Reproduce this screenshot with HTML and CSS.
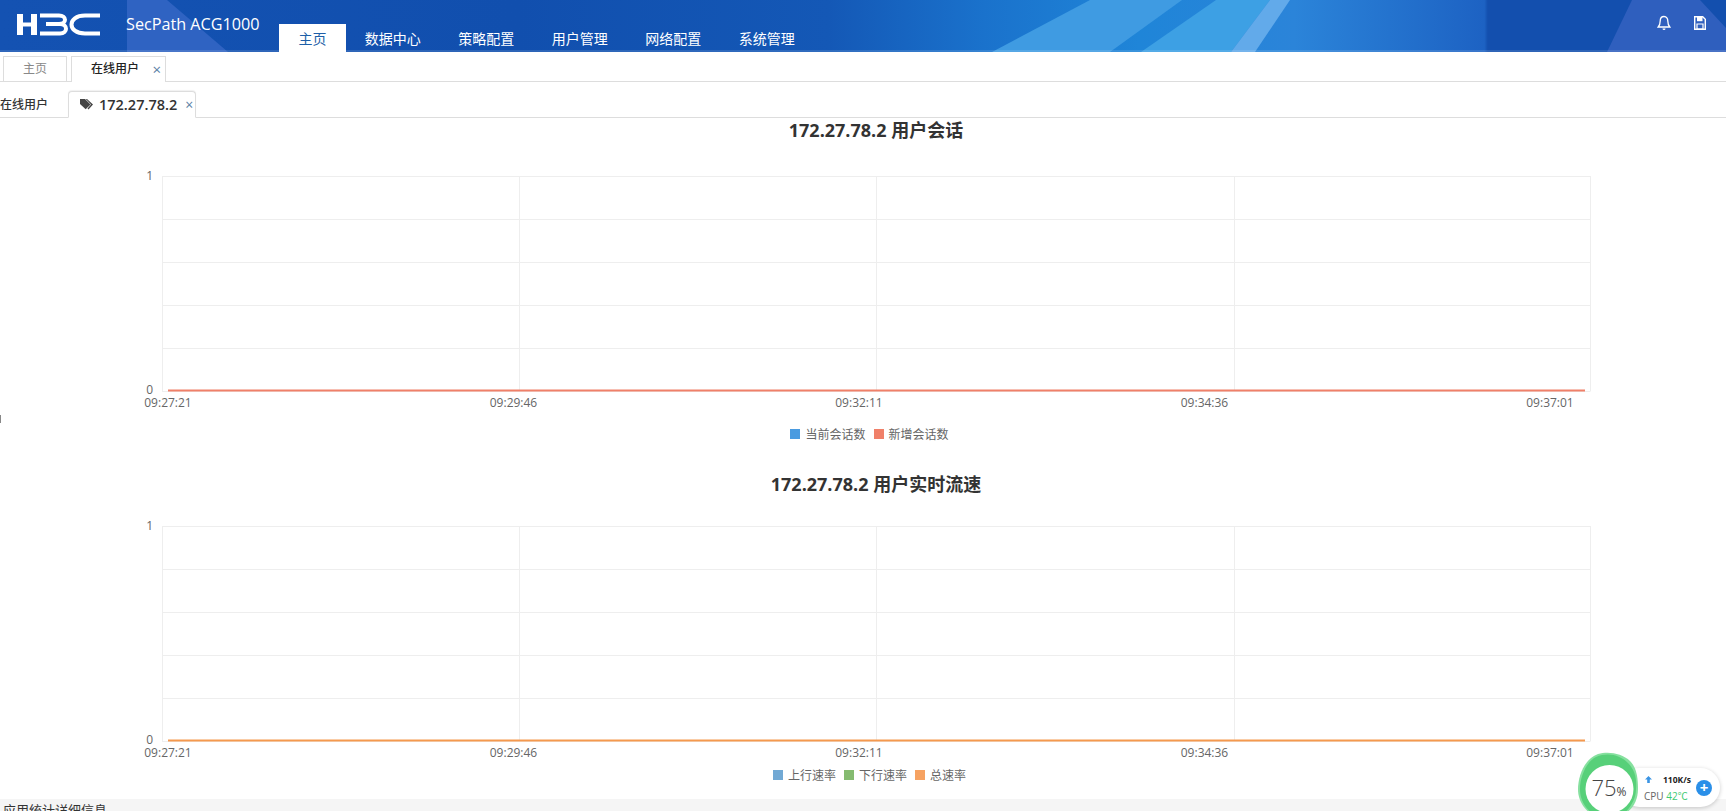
FILE: index.html
```html
<!DOCTYPE html>
<html lang="zh-CN">
<head>
<meta charset="utf-8">
<title>SecPath ACG1000</title>
<link rel="stylesheet" href="styles.css">
</head>
<body>
<div class="page">
  <header class="topbar">
    <svg class="topbar-bg" width="1726" height="52" viewBox="0 0 1726 52" preserveAspectRatio="none" aria-hidden="true">
      <defs>
        <linearGradient id="bgGrad" x1="0" x2="1" y1="0" y2="0">
          <stop offset="0" stop-color="#1452b2"/>
          <stop offset="0.3" stop-color="#114fae"/>
          <stop offset="0.48" stop-color="#1458b6"/>
          <stop offset="0.57" stop-color="#1a72cc"/>
          <stop offset="0.66" stop-color="#1f85d8"/>
          <stop offset="0.75" stop-color="#2b84d9"/>
          <stop offset="0.86" stop-color="#1d62c3"/>
          <stop offset="0.862" stop-color="#134fae"/>
          <stop offset="1" stop-color="#134fae"/>
        </linearGradient>
      </defs>
      <rect width="1726" height="52" fill="url(#bgGrad)"/>
      <polygon points="127,0 167,0 228,52 127,52" fill="#2f63c2"/>
      <polygon points="992,52 1090,0 1182,0 1110,52" fill="#3f9be2"/>
      <polygon points="1141,52 1216,0 1270,0 1231,52" fill="#3da0e4"/>
      <polygon points="1231,52 1270,0 1290,0 1255,52" fill="#62aaea"/>
      <polygon points="1607,52 1632,0 1700,0 1726,28 1726,52" fill="#2f5fbe"/>
      <rect y="50" width="1726" height="2" fill="#ffffff" fill-opacity="0.12"/>
    </svg>
    <svg class="logo" width="84" height="23" viewBox="0 0 84 23" aria-label="H3C">
      <g fill="none" stroke="#fff">
        <path d="M3 1v21M17 1v21" stroke-width="6"/>
        <path d="M3 11.500h14" stroke-width="4"/>
        <path d="M23 2.500H42C50 2.500 50 11 42 11H29H43C51 11 51 20.500 43 20.500H23" stroke-width="4"/>
        <path d="M83 2.500H68C50 2.500 50 20.500 68 20.500H83" stroke-width="4"/>
      </g>
    </svg>
    <span class="product">SecPath ACG1000</span>
    <nav class="mainnav">
      <a class="navitem navitem-active">主页</a>
      <a class="navitem">数据中心</a>
      <a class="navitem">策略配置</a>
      <a class="navitem">用户管理</a>
      <a class="navitem">网络配置</a>
      <a class="navitem">系统管理</a>
    </nav>
    <div class="top-icons">
      <svg width="14" height="16" viewBox="0 0 14 16" aria-label="通知">
        <path d="M7 1.500c-2.600 0-3.800 2-3.800 4.500 0 3-.8 4.600-2 6h11.600c-1.200-1.400-2-3-2-6 0-2.500-1.200-4.500-3.800-4.500z" fill="none" stroke="#fff" stroke-width="1.300"/>
        <path d="M5.500 13.500a1.500 1.500 0 0 0 3 0z" fill="#fff"/>
      </svg>
      <svg width="12" height="16" viewBox="0 0 12 16" aria-label="保存">
        <path d="M.7 1.700h8l2.600 2.500v10H.7z" fill="none" stroke="#fff" stroke-width="1.400"/>
        <path d="M3 1.700h5.500v4.500H3z" fill="#fff"/>
        <path d="M3 9h6v5H3z" fill="none" stroke="#fff" stroke-width="1.200"/>
      </svg>
    </div>
  </header>

  <div class="pagetabs">
    <span class="pagetab">主页</span>
    <span class="pagetab pagetab-active">在线用户<i class="close">×</i></span>
  </div>

  <div class="subtabs">
    <span class="subtab">在线用户</span>
    <span class="subtab subtab-active">
      <svg width="14" height="11" viewBox="0 0 14 11" aria-hidden="true">
        <path d="M0 0h5l5.500 5.500-4.800 4.800L0 5z" fill="#444"/>
        <path d="M7 0l6 5.500-4.500 5-1-1L11 5.500 5.800 0z" fill="#444"/>
      </svg>
      172.27.78.2<i class="close">×</i>
    </span>
  </div>

  <main class="charts">
    <section class="chart">
      <h2 class="chart-title">172.27.78.2 用户会话</h2>
      <svg class="plot" width="1726" height="270" viewBox="0 0 1726 270">
        <g class="grid">
          <path d="M162 32.500H1590.500M162 75.500H1590.500M162 118.500H1590.500M162 161.500H1590.500M162 204.500H1590.500M162 247.500H1590.500"/>
          <path d="M162.500 32V247M519.500 32V247M876.500 32V247M1234.500 32V247M1590.500 32V247"/>
        </g>
        <text class="ylabel" x="153" y="36">1</text>
        <text class="ylabel" x="153" y="250">0</text>
        <line x1="168" x2="1585" y1="246.500" y2="246.500" stroke="#f08069" stroke-width="2"/>
        <g class="xlabels">
          <text x="168" y="263">09:27:21</text>
          <text x="513.500" y="263">09:29:46</text>
          <text x="859" y="263">09:32:11</text>
          <text x="1204.500" y="263">09:34:36</text>
          <text x="1550" y="263">09:37:01</text>
        </g>
      </svg>
      <div class="legend legend-session">
        <span class="legend-item"><i class="swatch swatch-blue"></i>当前会话数</span>
        <span class="legend-item"><i class="swatch swatch-red"></i>新增会话数</span>
      </div>
    </section>

    <section class="chart chart-flow">
      <h2 class="chart-title">172.27.78.2 用户实时流速</h2>
      <svg class="plot" width="1726" height="264" viewBox="0 0 1726 264">
        <g class="grid">
          <path d="M162 28.500H1590.500M162 71.500H1590.500M162 114.500H1590.500M162 157.500H1590.500M162 200.500H1590.500M162 243.500H1590.500"/>
          <path d="M162.500 28V243M519.500 28V243M876.500 28V243M1234.500 28V243M1590.500 28V243"/>
        </g>
        <text class="ylabel" x="153" y="32">1</text>
        <text class="ylabel" x="153" y="246">0</text>
        <line x1="168" x2="1585" y1="242.500" y2="242.500" stroke="#f5994e" stroke-width="2"/>
        <g class="xlabels">
          <text x="168" y="259">09:27:21</text>
          <text x="513.500" y="259">09:29:46</text>
          <text x="859" y="259">09:32:11</text>
          <text x="1204.500" y="259">09:34:36</text>
          <text x="1550" y="259">09:37:01</text>
        </g>
      </svg>
      <div class="legend legend-flow">
        <span class="legend-item"><i class="swatch swatch-steel"></i>上行速率</span>
        <span class="legend-item"><i class="swatch swatch-green"></i>下行速率</span>
        <span class="legend-item"><i class="swatch swatch-orange"></i>总速率</span>
      </div>
    </section>
  </main>

  <footer class="appinfo">应用统计详细信息</footer>
  <i class="edge-mark"></i>

  <aside class="monitor">
    <div class="pill">
      <div class="pill-stats">
        <div class="speed">
          <svg width="9" height="9" viewBox="0 0 9 9" aria-hidden="true"><path d="M4.500 1L1 4.500h2.200V8h2.600V4.500H8z" fill="#3a94e4"/></svg>
          <span>110K/s</span>
        </div>
        <div class="cpu">CPU <em>42℃</em></div>
      </div>
      <span class="plus">+</span>
    </div>
    <svg class="ring" width="64" height="66" viewBox="0 0 64 66" aria-hidden="true">
      <path d="M22 5C32 2 46 4 54 12C61 19 62 30 62 40C62 52 56 62 46 66H16C6 58 2 50 2 40C2 28 8 10 22 5z" fill="#86e09f"/>
      <path d="M20 8C32 3 44 6 52 14C59 21 61 30 60 40C60 50 54 60 46 66H18C8 58 4 50 4 40C4 28 10 13 20 8z" fill="#57d079"/>
      <circle cx="33.500" cy="40" r="24" fill="#fff"/>
    </svg>
    <div class="ring-value"><b>75</b><small>%</small></div>
  </aside>
</div>
</body>
</html>
```
FILE: styles.css
```css
* { box-sizing: border-box; }
html, body { margin: 0; padding: 0; height: 100%; overflow: hidden; background: #fff; }
body { font-family: "Open Sans", "Noto Sans CJK SC", sans-serif; color: #333; }
.page { position: relative; width: 1726px; height: 811px; overflow: hidden; }

.topbar { position: relative; height: 52px; display: flex; align-items: flex-end; color: #fff; }
.topbar-bg { position: absolute; left: 0; top: 0; }
.logo { position: absolute; left: 17px; top: 13px; }
.product { position: absolute; left: 126px; top: 13px; font-size: 16.200px; line-height: 22px; font-weight: 400; white-space: nowrap; }
.mainnav { position: relative; display: flex; margin-left: 279px; height: 28px; }
.navitem { padding: 0 18.750px; font-size: 14px; line-height: 30px; color: #fff; white-space: nowrap; }
.navitem-active { padding: 0 19.500px; background: #fff; color: #1e5fa8; }
.top-icons { position: absolute; top: 15px; right: 20px; display: flex; gap: 23px; }
.top-icons svg { display: block; }

.pagetabs { height: 30px; display: flex; align-items: flex-end; gap: 4px; padding-left: 3px; border-bottom: 1px solid #ddd; }
.pagetab { height: 25px; width: 64px; border: 1px solid #ddd; border-bottom: 0; font-size: 12px; line-height: 23px; text-align: center; color: #888; background: #fff; }
.pagetab-active { position: relative; width: 95px; margin-bottom: -1px; height: 26px; padding: 0 7px 0 0; color: #222; font-weight: 500; }
.close { font-style: normal; font-weight: 400; color: #5b7fa6; font-size: 15px; }
.pagetab-active .close { position: absolute; right: 4px; top: 1px; }

.subtabs { height: 36px; display: flex; align-items: flex-end; border-bottom: 1px solid #ddd; }
.subtab { width: 68px; height: 25px; font-size: 12px; line-height: 25px; color: #333; white-space: nowrap; font-weight: 500; }
.subtab-active { width: 128px; height: 27px; margin-bottom: -1px; display: flex; align-items: center; gap: 5px; padding-left: 11px; border: 1px solid #ddd; border-bottom: 1px solid #fff; border-radius: 4px 4px 0 0; font-size: 14.500px; font-weight: 600; background: #fff; box-shadow: 0 -1px 1px rgba(0, 0, 0, 0.06); }
.subtab-active .close { margin-left: 3px; font-size: 14px; }

.chart-title { margin: 0; height: 26px; padding-left: 26px; font-size: 18px; line-height: 24px; font-weight: 700; text-align: center; color: #333; }
.chart-flow { margin-top: 18px; }
.plot { display: block; }
.grid path { fill: none; stroke: #eeeeee; stroke-width: 1; }
.ylabel { font-size: 12px; fill: #666; text-anchor: end; font-family: "Open Sans", sans-serif; }
.xlabels text { font-size: 12px; fill: #666; text-anchor: middle; font-family: "Open Sans", sans-serif; }

.legend { display: flex; justify-content: center; align-items: center; gap: 8px; padding-left: 13px; font-size: 12px; color: #666; }
.legend-session { height: 40px; }
.legend-flow { height: 26px; }
.legend-item { display: flex; align-items: center; gap: 5px; white-space: nowrap; }
.swatch { display: block; width: 10px; height: 10px; }
.swatch-blue { background: #4a9be0; }
.swatch-red { background: #f08069; }
.swatch-steel { background: #72a9d4; }
.swatch-green { background: #85bb70; }
.swatch-orange { background: #f6a262; }

.appinfo { position: absolute; left: 0; right: 0; top: 799px; height: 12px; padding-left: 3px; background: #f5f5f5; font-size: 13px; line-height: 22px; color: #333; overflow: hidden; }
.edge-mark { position: absolute; left: 0; top: 415px; width: 1px; height: 8px; background: #888; }

.monitor { position: absolute; left: 1576px; top: 749px; width: 150px; height: 62px; }
.ring { position: absolute; left: 0; top: 0; }
.ring-value { position: absolute; left: 1px; top: 18px; width: 64px; text-align: center; color: #444; white-space: nowrap; }
.ring-value b { font-weight: 300; font-size: 22px; line-height: 40px; }
.ring-value small { font-size: 12px; }
.pill { position: absolute; left: 44px; top: 19px; width: 100px; height: 39px; padding-left: 24px; display: flex; align-items: center; justify-content: space-between; background: #fff; border-radius: 20px; box-shadow: 0 1px 4px rgba(0, 0, 0, 0.2); }
.pill-stats { display: flex; flex-direction: column; gap: 4px; }
.speed { display: flex; align-items: center; gap: 10px; font-size: 8.500px; font-weight: 700; line-height: 13px; color: #222; white-space: nowrap; }
.cpu { font-size: 10px; line-height: 13px; color: #666; white-space: nowrap; }
.cpu em { font-style: normal; color: #3ecb72; }
.plus { width: 16px; height: 16px; margin-right: 8px; border-radius: 50%; background: #2a8fe8; color: #fff; font-size: 15px; font-weight: 700; line-height: 15px; text-align: center; }
```
